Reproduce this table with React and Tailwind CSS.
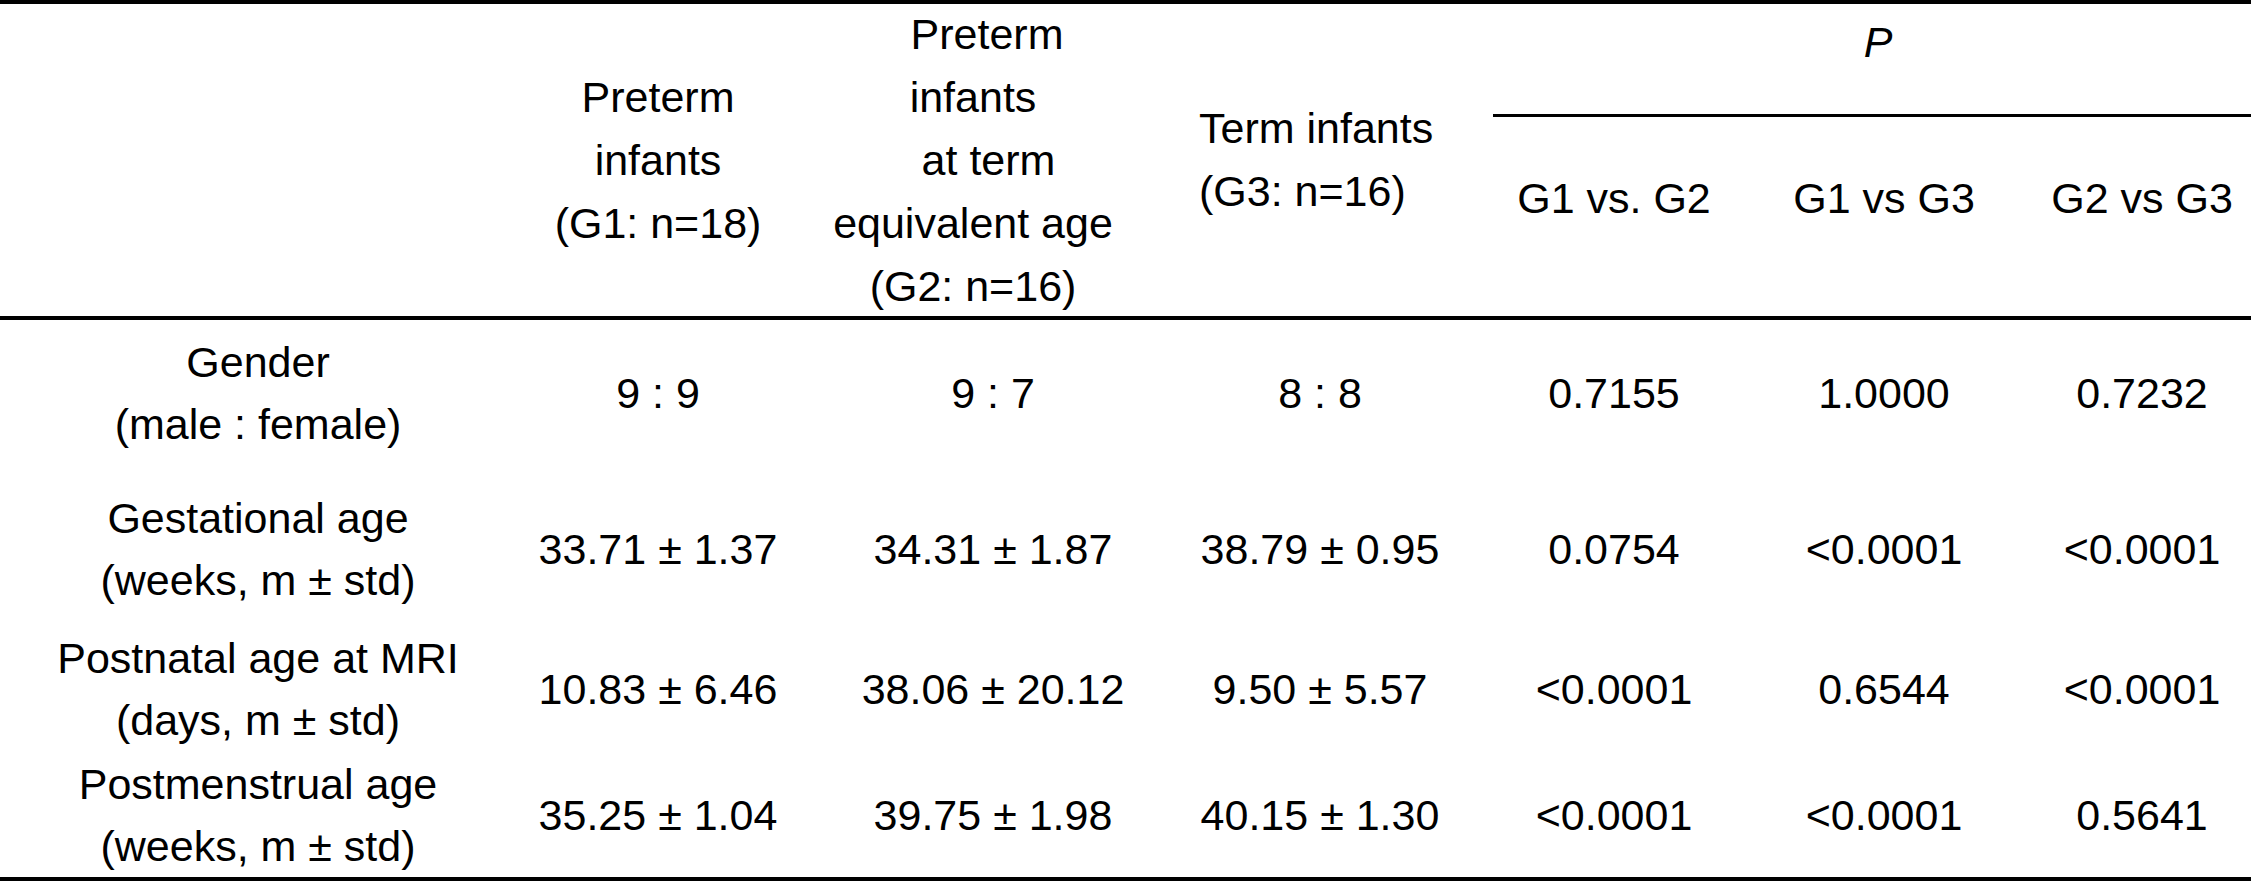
import React from "react";

const rows = [
  {
    label: ["Gender", "(male : female)"],
    values: ["9 : 9", "9 : 7", "8 : 8", "0.7155", "1.0000", "0.7232"],
    gap: "mt-[11px]",
  },
  {
    label: ["Gestational age", "(weeks, m ± std)"],
    values: ["33.71 ± 1.37", "34.31 ± 1.87", "38.79 ± 0.95", "0.0754", "<0.0001", "<0.0001"],
    gap: "mt-[32px]",
  },
  {
    label: ["Postnatal age at MRI", "(days, m ± std)"],
    values: ["10.83 ± 6.46", "38.06 ± 20.12", "9.50 ± 5.57", "<0.0001", "0.6544", "<0.0001"],
    gap: "mt-[16px]",
  },
  {
    label: ["Postmenstrual age", "(weeks, m ± std)"],
    values: ["35.25 ± 1.04", "39.75 ± 1.98", "40.15 ± 1.30", "<0.0001", "<0.0001", "0.5641"],
    gap: "mt-[2px]",
  },
];

// widths of the value columns, in order G1, G2, G3, then the three P columns
const valueCols = [
  "w-[284px]",
  "w-[386px]",
  "w-[307px] pr-[39px]",
  "w-[242px]",
  "w-[298px]",
  "w-[218px]",
];

const DataRow = ({ row }) => (
  <div className={`flex leading-[62px] ${row.gap}`}>
    <div className="w-[516px] flex flex-col items-center">
      {row.label.map((line) => (
        <span key={line}>{line}</span>
      ))}
    </div>
    {row.values.map((v, i) => (
      <div key={i} className={`${valueCols[i]} flex items-center justify-center`}>
        {v}
      </div>
    ))}
  </div>
);

const App = () => {
  return (
    <div className="w-[2251px] h-[881px] overflow-hidden bg-white text-black whitespace-nowrap font-['Liberation_Sans',Arial,sans-serif] text-[43px] leading-[63px]">
      <div className="h-[4px] bg-black" />

      {/* Header */}
      <div className="flex h-[312px]">
        <div className="w-[516px]" />

        <div className="w-[284px] flex flex-col items-center justify-center">
          <span>Preterm</span>
          <span>infants</span>
          <span>(G1: n=18)</span>
        </div>

        <div className="w-[386px] flex flex-col items-center justify-center pr-[40px]">
          <span className="pl-[28px]">Preterm</span>
          <span>infants</span>
          <span className="pl-[31px]">at term</span>
          <span>equivalent age</span>
          <span>(G2: n=16)</span>
        </div>

        <div className="w-[307px] flex flex-col items-start justify-center pl-[13px]">
          <span>Term infants</span>
          <span>(G3: n=16)</span>
        </div>

        <div className="w-[758px] flex flex-col">
          <div className="pt-[7px] pl-[12px] text-center italic">P</div>
          <div className="mt-[40px] h-[3px] bg-black" />
          <div className="mt-[50px] grid grid-cols-[242px_298px_218px] text-center">
            <span>G1 vs. G2</span>
            <span>G1 vs G3</span>
            <span>G2 vs G3</span>
          </div>
        </div>
      </div>

      <div className="h-[4px] bg-black" />

      {/* Body */}
      {rows.map((row) => (
        <DataRow key={row.label[0]} row={row} />
      ))}

      <div className="h-[4px] bg-black" />
    </div>
  );
};

export default App;
